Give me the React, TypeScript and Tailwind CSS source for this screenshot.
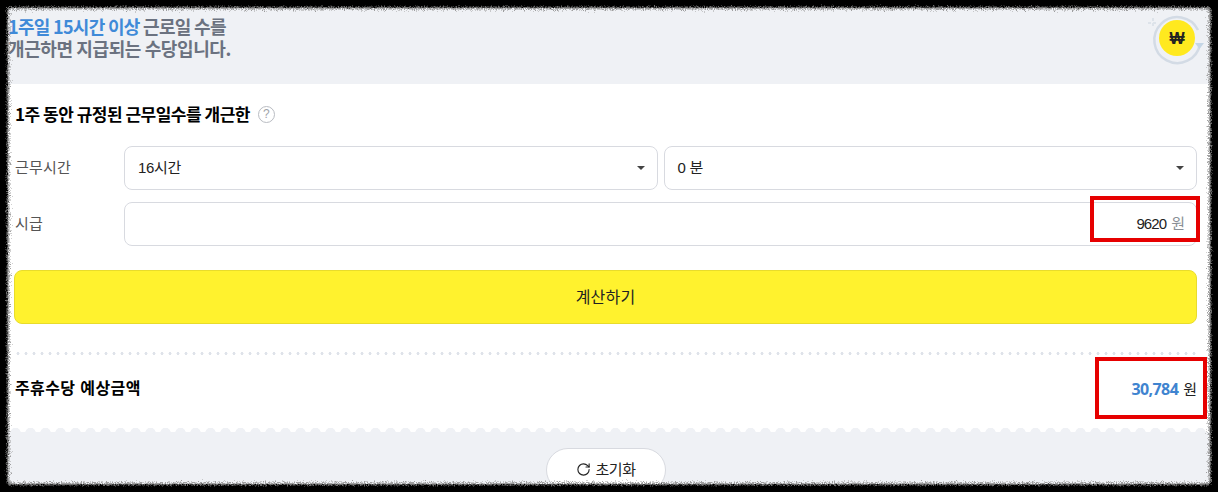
import { RotateCw } from 'lucide-react';

const font = { kr: 'font-["Liberation_Sans","Noto_Sans_CJK_KR",sans-serif]' };

function Caret() {
  return <span className="h-0 w-0 border-x-[4px] border-t-[4px] border-x-transparent border-t-[#444]" />;
}

function SelectBox({ value }: { value: string }) {
  return (
    <div className="flex h-[44px] flex-1 items-center justify-between rounded-lg border border-[#d8dae0] bg-white pl-[13px] pr-[12px] text-[15px] tracking-[-0.3px] text-[#222]">
      <span>{value}</span>
      <Caret />
    </div>
  );
}

function CoinBadge() {
  return (
    <svg width="64" height="64" viewBox="0 0 64 64" className="absolute right-[0px] top-[-2px]">
      <path d="M52 24 A23 23 0 1 0 54 38" fill="none" stroke="#d3dbe5" strokeWidth="2.5" />
      <path d="M49 37 h9 l-4.5 6 z" fill="#c5d6e6" />
      <path d="M2 17 h10 M7 12 v10" stroke="#dde3ea" strokeWidth="2" strokeDasharray="3 2" />
      <circle cx="31" cy="32" r="18" fill="#ffe91f" />
      <text x="31" y="38" textAnchor="middle" fontSize="16" fontWeight="900" fill="#222" fontFamily="Liberation Sans, sans-serif">₩</text>
    </svg>
  );
}

function TornEdge() {
  return (
    <svg width="1218" height="492" className="pointer-events-none absolute left-0 top-0">
      <defs>
        <filter id="torn" x="-2%" y="-2%" width="104%" height="104%">
          <feTurbulence type="fractalNoise" baseFrequency="0.7" numOctaves="2" seed="4" />
          <feDisplacementMap in="SourceGraphic" scale="6" />
        </filter>
        <filter id="grain" x="-2%" y="-2%" width="104%" height="104%">
          <feTurbulence type="fractalNoise" baseFrequency="0.9" numOctaves="3" seed="9" />
          <feDisplacementMap in="SourceGraphic" scale="9" />
        </filter>
      </defs>
      <rect x="7.5" y="7.5" width="1203" height="477" rx="5" fill="none" stroke="#8a8a8a" strokeWidth="4" filter="url(#grain)" opacity="0.8" />
      <rect x="-1" y="-1" width="1220" height="494" fill="none" stroke="#000" strokeWidth="15" filter="url(#torn)" />
    </svg>
  );
}

export default function App() {
  return (
    <div className={`relative h-[492px] w-[1218px] overflow-hidden bg-black p-[8px] ${font.kr}`}>
      <div className="flex h-full flex-col overflow-hidden rounded bg-[#eff1f5]">
        {/* top banner */}
        <div className="relative h-[76px] shrink-0 pt-[7px] font-['Noto_Sans_CJK_KR',sans-serif] text-[18px] font-bold leading-[22px] text-[#6b7280]">
          <div className="tracking-[-0.7px]">
            <span className="text-[#3f8ad8]">1주일 15시간 이상</span> 근로일 수를
          </div>
          <div className="tracking-[-0.4px]">개근하면 지급되는 수당입니다.</div>
          <CoinBadge />
        </div>

        {/* calculator */}
        <div className="flex h-[348px] shrink-0 flex-col bg-white pl-[6px] pr-[13px] pt-[18px]">
          <div className="flex h-[24px] items-center gap-[8px] pl-px">
            <h2 className="font-['Noto_Sans_CJK_KR',sans-serif] text-[17px] font-bold tracking-[-0.5px] text-black">
              1주 동안 규정된 근무일수를 개근한
            </h2>
            <span className="flex h-[17px] w-[17px] items-center justify-center rounded-full border border-[#b9bcc2] text-[12px] leading-none text-[#a0a3a9]">
              ?
            </span>
          </div>

          <div className="mt-[20px] flex items-center">
            <span className="w-[110px] pl-px text-[15px] tracking-[0.2px] text-[#555]">근무시간</span>
            <div className="flex flex-1 gap-[6px]">
              <SelectBox value="16시간" />
              <SelectBox value="0 분" />
            </div>
          </div>

          <div className="mt-[12px] flex items-center">
            <span className="w-[110px] pl-px text-[15px] tracking-[0.2px] text-[#555]">시급</span>
            <div className="flex h-[44px] flex-1 items-center justify-end gap-[5px] rounded-lg border border-[#d8dae0] bg-white pr-[11px] text-[15px] text-[#222]">
              <span className="tracking-[-0.9px]">9620</span>
              <span className="text-[#8a8f96]">원</span>
            </div>
          </div>

          <button className="mt-[24px] h-[54px] w-full shrink-0 rounded-lg border border-[#e8dc2c] bg-[#fff22e] pt-[2px] text-[16px] tracking-[0.2px] text-[#222]">
            계산하기
          </button>

          <div className="mt-[28px] h-[3px] w-full shrink-0 bg-[radial-gradient(circle,#dfe3ea_1.4px,transparent_1.6px)] bg-[length:8px_3px]" />

          <div className="flex flex-1 items-center justify-between pb-[9px]">
            <span className="pl-px text-[16px] font-bold tracking-[0.4px] text-black">주휴수당 예상금액</span>
            <span className="text-[15px] text-[#222]">
              <span className="mr-[5px] font-['Open_Sans',sans-serif] text-[16px] font-bold tracking-[-0.6px] text-[#3f84d0]">30,784</span>원
            </span>
          </div>
        </div>

        {/* scalloped tear line */}
        <div className="-mt-[4px] h-[4px] shrink-0 bg-[radial-gradient(circle_at_7.5px_5px,#eff1f5_5px,transparent_5.5px)] bg-[length:15px_4px]" />

        <div className="flex flex-1 justify-center pt-[16px] pr-[7px]">
          <button className="flex h-[44px] w-[120px] shrink-0 items-start justify-center gap-[5px] rounded-full border border-[#d8dae0] bg-white pt-[10px] text-[15px] tracking-[-0.5px] text-[#222]">
            <RotateCw size={15} strokeWidth={1.8} className="mt-[3px]" />
            초기화
          </button>
        </div>
      </div>

      <TornEdge />

      {/* annotation boxes */}
      <div className="absolute left-[1090px] top-[196px] h-[46px] w-[110px] border-[4px] border-[#e60000]" />
      <div className="absolute left-[1095px] top-[357px] h-[62px] w-[112px] border-[4px] border-[#e60000]" />
    </div>
  );
}
